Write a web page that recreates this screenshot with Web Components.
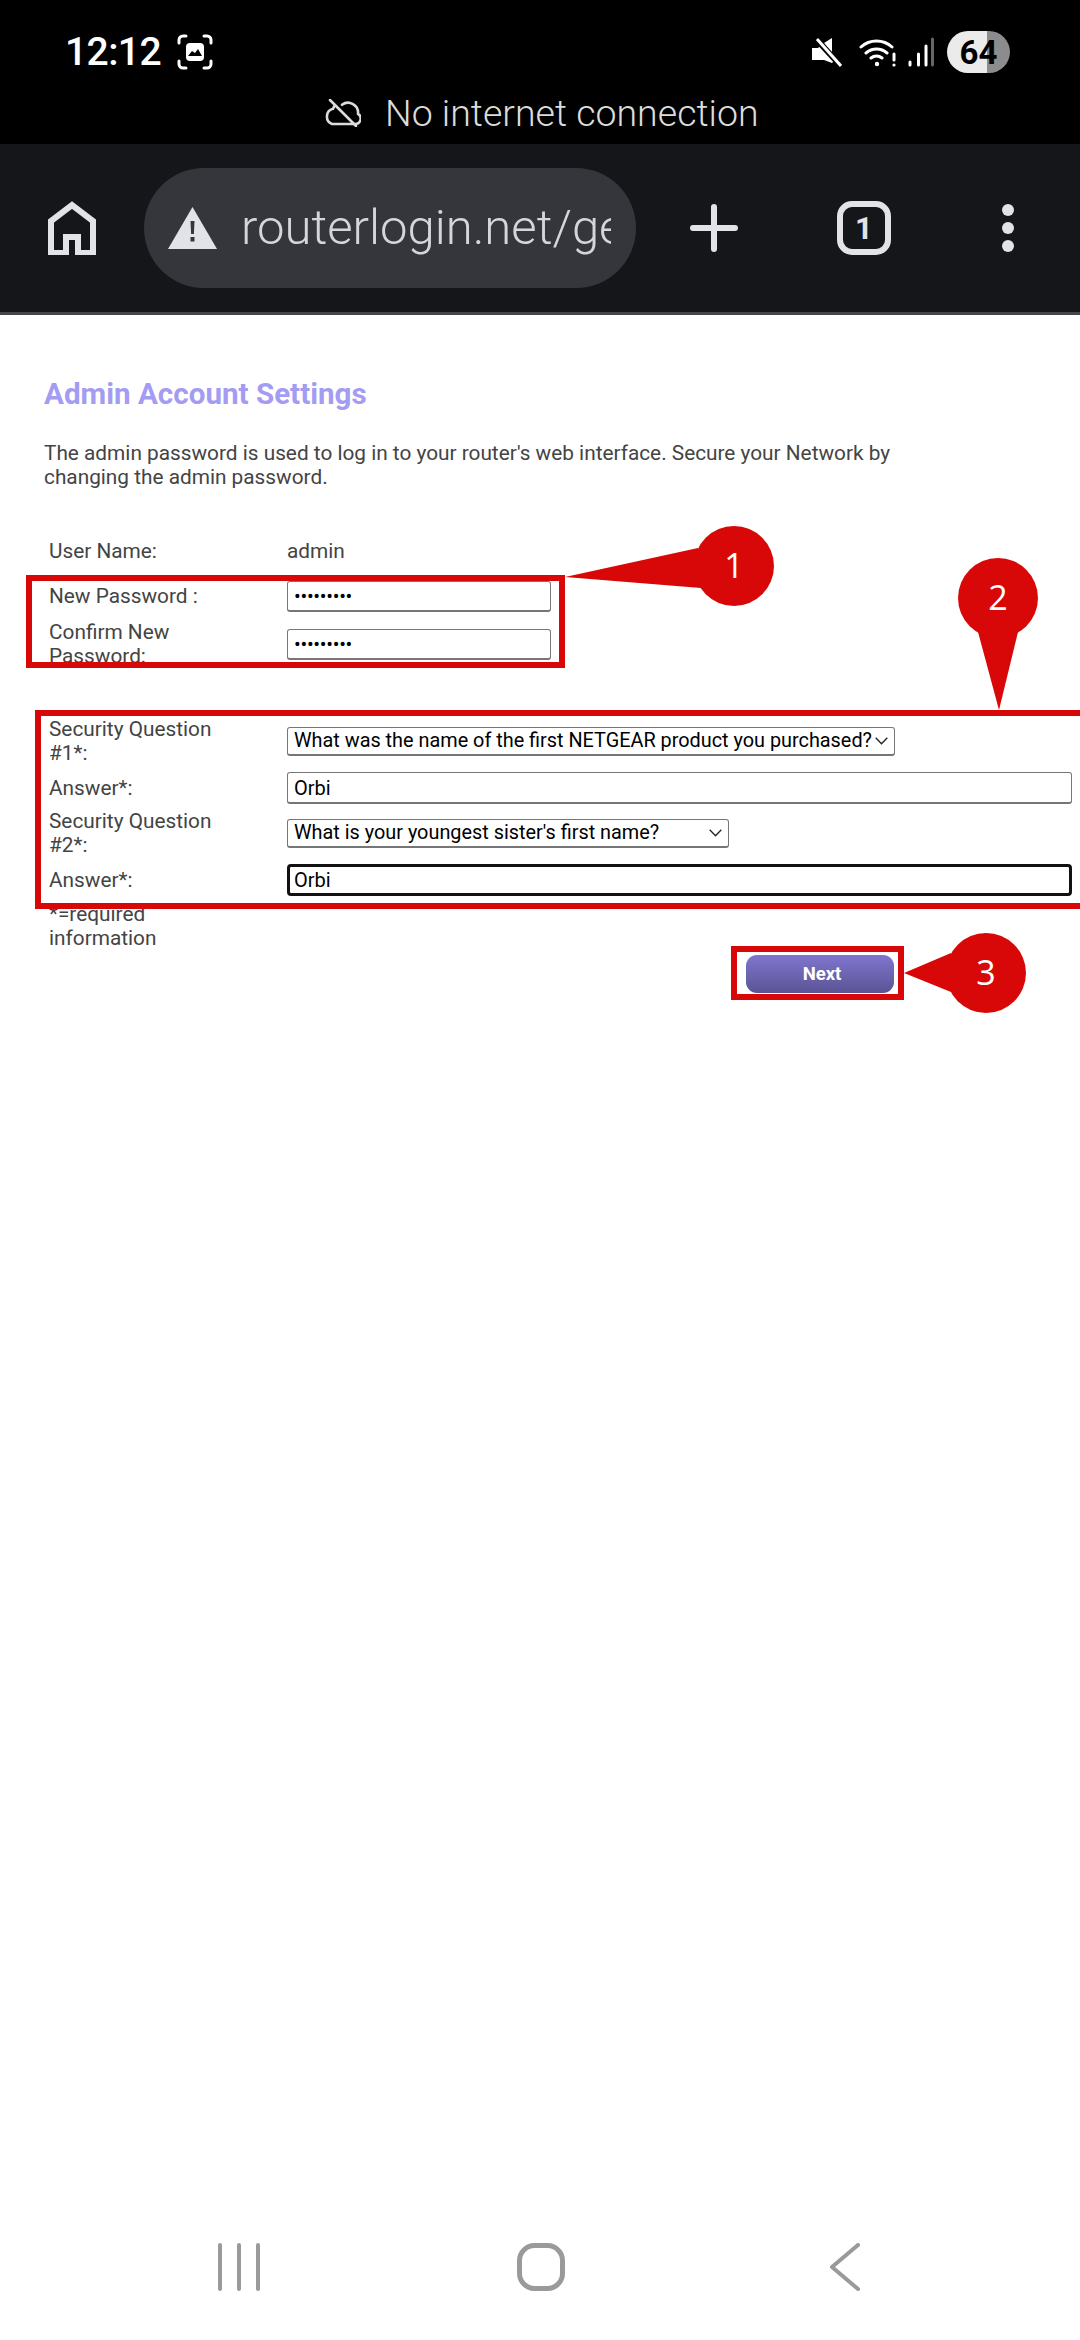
<!DOCTYPE html>
<html>
<head>
<meta charset="utf-8">
<title>Admin Account Settings</title>
<style>
  html, body { margin: 0; padding: 0; background: #fff; }
  body { width: 1080px; height: 2340px; position: relative; overflow: hidden; font-family: Roboto, sans-serif; }
  #page { display: flex; flex-direction: column; height: 2340px; }
</style>
</head>
<body>
<div id="page">
  <phone-status></phone-status>
  <browser-toolbar url="routerlogin.net/ge"></browser-toolbar>
  <admin-form></admin-form>
  <nav-bar></nav-bar>
</div>
<annotation-layer></annotation-layer>

<script>
class PhoneStatus extends HTMLElement {
  constructor() {
    super();
    this.attachShadow({ mode: "open" });
    this.shadowRoot.innerHTML = `
      <style>
        :host { display: block; height: 144px; background: #000; color: #fff; font-family: Roboto, sans-serif; flex: none; }
        .top { display: flex; align-items: center; height: 88px; padding: 16px 0 0 65px; box-sizing: border-box; }
        .time { font-size: 39px; font-weight: 500; width: 112px; letter-spacing: -0.6px; line-height: 46px; }
        .right { margin-left: auto; display: flex; align-items: center; padding-right: 70px; }
        .right svg { display: block; }
        .batt { width: 63px; height: 42px; border-radius: 21px; margin-left: 13px; color: #000; font-size: 33px; font-weight: 700;
          background: linear-gradient(90deg, #ebebeb 0 40px, #8c8c8c 40px); display: flex; align-items: center; justify-content: center; }
        .net { display: flex; align-items: center; height: 50px; padding-left: 324px; color: #dcdcdc; font-size: 37.500px; font-weight: 300; }
        .net svg { margin-right: 24px; }
      </style>
      <div class="top">
        <span class="time">12:12</span>
        <svg width="36" height="36" viewBox="0 0 36 36" fill="none" stroke="#fff" stroke-width="3" stroke-linecap="round">
          <path d="M2 9V6a4 4 0 0 1 4-4h3M27 2h3a4 4 0 0 1 4 4v3M34 27v3a4 4 0 0 1-4 4h-3M9 34H6a4 4 0 0 1-4-4v-3"/>
          <rect x="9" y="9" width="18" height="18" rx="4" fill="#fff" stroke="none"/>
          <path d="M11 22l4-5 3 2 3-4 4 7z" fill="#000" stroke="none"/>
        </svg>
        <div class="right">
          <svg width="30" height="30" viewBox="0 0 30 30" style="margin-right:17px">
            <path d="M0 11h6l3-3 14 16-2 1-1 1-8-3-6 0H0z" fill="#fff"/>
            <path d="M12 6l8-5v15z" fill="#fff"/>
            <path d="M5 3l24 26" stroke="#000" stroke-width="6"/>
            <path d="M5 2l24 27" stroke="#fff" stroke-width="3"/>
          </svg>
          <svg width="38" height="30" viewBox="0 0 38 30" fill="none" stroke="#fff" stroke-width="3" stroke-linecap="round" style="margin-right:11px">
            <path d="M2 10a23 23 0 0 1 31 0M7 16a16 16 0 0 1 21 0M12 21a9 9 0 0 1 11 0"/>
            <circle cx="18" cy="27" r="2.2" fill="#fff" stroke="none"/>
            <path d="M35 17v6"/>
            <circle cx="35" cy="28" r="1.6" fill="#fff" stroke="none"/>
          </svg>
          <svg width="26" height="30" viewBox="0 0 26 30" stroke-width="3" stroke-linecap="round" fill="none">
            <path d="M2 25v3M10.500 17v11M18 9v19" stroke="#fff"/>
            <path d="M24.500 2v26" stroke="#666"/>
          </svg>
          <div class="batt">64</div>
        </div>
      </div>
      <div class="net">
        <svg width="37" height="28" viewBox="0 0 37 28" fill="none" stroke="#dcdcdc" stroke-width="2.600" stroke-linecap="round">
          <path d="M11 6.500A9 9 0 0 0 9 9.800 8 8 0 0 0 8 25h23a5.500 5.500 0 0 0 3-10.200 10 10 0 0 0-16-9"/>
          <path d="M6 1l26 26"/>
        </svg>
        <span>No internet connection</span>
      </div>`;
  }
}

class BrowserToolbar extends HTMLElement {
  constructor() {
    super();
    this.attachShadow({ mode: "open" });
    const url = this.getAttribute("url");
    this.shadowRoot.innerHTML = `
      <style>
        :host { display: flex; align-items: center; height: 171px; box-sizing: border-box; background: #14161a; border-bottom: 3px solid #45464c;
          padding-left: 48px; color: #e2e3e8; font-family: Roboto, sans-serif; flex: none; }
        svg { display: block; flex: none; }
        .pill { width: 492px; height: 120px; margin-left: 48px; border-radius: 60px; background: #35363b; display: flex; align-items: center; padding-left: 24px; box-sizing: border-box; flex: none; }
        .url { margin-left: 24px; width: 370px; overflow: hidden; white-space: nowrap; font-size: 49px; font-weight: 300; color: #d5d6db; line-height: 60px; }
        .tab { width: 54px; height: 54px; box-sizing: border-box; border: 6px solid #e2e3e8; border-radius: 15px; margin-left: 99px; display: flex; align-items: center; justify-content: center; font-size: 31px; font-weight: 700; flex: none; }
        .dots { margin-left: 111px; display: grid; gap: 6px; }
        .dots i { display: block; width: 12px; height: 12px; border-radius: 50%; background: #e2e3e8; }
      </style>
      <svg width="48" height="54" viewBox="0 0 48 54" fill="none" stroke="#e2e3e8" stroke-width="6">
        <path d="M3 52V20L24 4l21 16v32H30V36H18v16z"/>
      </svg>
      <div class="pill">
        <svg width="49" height="42" viewBox="0 0 49 42">
          <path d="M24.500 0L49 42H0z" fill="#e2e3e8"/>
          <path d="M22.500 14h4l-.6 13h-2.800z M22.500 30h4v4.500h-4z" fill="#35363b"/>
        </svg>
        <div class="url">${url}</div>
      </div>
      <svg width="48" height="48" viewBox="0 0 48 48" stroke="#e2e3e8" stroke-width="6" stroke-linecap="round" style="margin-left:54px">
        <path d="M24 3v42M3 24h42"/>
      </svg>
      <div class="tab">1</div>
      <div class="dots"><i></i><i></i><i></i></div>`;
  }
}

class FormRow extends HTMLElement {
  constructor() {
    super();
    this.attachShadow({ mode: "open" });
    this.shadowRoot.innerHTML = `
      <style>
        :host { display: grid; grid-template-columns: 238px 1fr; align-items: center; padding-left: 49px; }
        .label { width: 170px; line-height: 24px; }
        .ctl { display: block; min-width: 0; }
      </style>
      <div class="label"><slot name="label"></slot></div>
      <div class="ctl"><slot></slot></div>`;
  }
}

class TextField extends HTMLElement {
  constructor() {
    super();
    this.attachShadow({ mode: "open" });
    this.shadowRoot.innerHTML = `
      <style>
        :host { display: flex; align-items: center; box-sizing: border-box; height: 31px; padding: 0 6px; border: 1px solid #767676; border-bottom-width: 2px;
          border-radius: 3px; color: #000; background: #fff; font-size: 20px; white-space: nowrap; }
        :host([focused]) { border: 3px solid #111; padding: 0 4px; height: 32px; border-radius: 4px; }
        :host([secret]) { letter-spacing: -0.3px; }
      </style>
      <slot></slot>`;
  }
}

class SelectField extends HTMLElement {
  constructor() {
    super();
    this.attachShadow({ mode: "open" });
    this.shadowRoot.innerHTML = `
      <style>
        :host { display: flex; align-items: center; justify-content: space-between; box-sizing: border-box; height: 29px; padding: 0 6px; border: 1px solid #767676; border-bottom-width: 2px;
          border-radius: 3px; color: #000; background: #fff; font-size: 19.850px; white-space: nowrap; }
        svg { flex: none; }
      </style>
      <slot></slot>
      <svg width="13" height="8" viewBox="0 0 13 8" fill="none" stroke="#222" stroke-width="1.300"><path d="M.7.7l5.800 6 5.800-6"/></svg>`;
  }
}

class AdminForm extends HTMLElement {
  constructor() {
    super();
    this.attachShadow({ mode: "open" });
    this.shadowRoot.innerHTML = `
      <style>
        :host { display: block; flex: 1; font-family: Roboto, sans-serif; font-size: 20.800px; color: #444; padding-top: 62px; }
        h1 { margin: 0 0 0 44px; font-size: 29.600px; line-height: 34px; font-weight: 700; color: #a39cf2; }
        p { margin: 30px 0 0 44px; width: 900px; line-height: 24px; }
        .rows { margin-top: 50px; }
        .short { width: 264px; }
        .wide { width: 785px; height: 32px; }
        .req { margin: 6px 0 0 49px; width: 170px; line-height: 24px; }
        .foot { display: flex; justify-content: flex-end; padding-right: 186px; margin-top: 5px; }
        .next { width: 148px; height: 38px; box-sizing: border-box; padding-left: 4px; border-radius: 11px; background: linear-gradient(#8075cf, #5a5494); color: #fff; font-weight: 700; font-size: 18.500px;
          display: flex; align-items: center; justify-content: center; }
      </style>
      <h1>Admin Account Settings</h1>
      <p>The admin password is used to log in to your router's web interface. Secure your Network by changing the admin password.</p>
      <div class="rows">
        <form-row style="height:24px"><span slot="label">User Name:</span>admin</form-row>
        <form-row style="height:32px;margin-top:17px"><span slot="label">New Password :</span><text-field secret class="short">•••••••••</text-field></form-row>
        <form-row style="height:48px;margin-top:8px"><span slot="label">Confirm New Password:</span><text-field secret class="short">•••••••••</text-field></form-row>
        <form-row style="height:48px;margin-top:49px"><span slot="label">Security Question #1*:</span><select-field style="width:608px">What was the name of the first NETGEAR product you purchased?</select-field></form-row>
        <form-row style="height:32px;margin-top:7px"><span slot="label">Answer*:</span><text-field class="wide">Orbi</text-field></form-row>
        <form-row style="height:48px;margin-top:5px"><span slot="label">Security Question #2*:</span><select-field style="width:442px">What is your youngest sister's first name?</select-field></form-row>
        <form-row style="height:32px;margin-top:7px"><span slot="label">Answer*:</span><text-field focused class="wide">Orbi</text-field></form-row>
      </div>
      <div class="req">*=required information</div>
      <div class="foot"><div class="next">Next</div></div>`;
  }
}

class NavBar extends HTMLElement {
  constructor() {
    super();
    this.attachShadow({ mode: "open" });
    this.shadowRoot.innerHTML = `
      <style>
        :host { display: flex; align-items: flex-start; height: 97px; flex: none; padding-left: 218px; }
        svg { display: block; flex: none; }
      </style>
      <svg width="42" height="48" viewBox="0 0 42 48" stroke="#9a9a9a" stroke-width="4" stroke-linecap="round">
        <path d="M2 2v44M21 2v44M40 2v44"/>
      </svg>
      <svg width="48" height="48" viewBox="0 0 48 48" fill="none" stroke="#9a9a9a" stroke-width="5" style="margin-left:257px">
        <rect x="2.500" y="2.500" width="43" height="43" rx="15"/>
      </svg>
      <svg width="30" height="48" viewBox="0 0 30 48" fill="none" stroke="#9a9a9a" stroke-width="4" stroke-linecap="round" stroke-linejoin="round" style="margin-left:265px">
        <path d="M28 2L2 24l26 22"/>
      </svg>`;
  }
}

// red boxes and numbered pins drawn on top of the screenshot
const BOXES = [
  [26, 575, 539, 93],
  [35, 710, 1051, 199],
  [731, 946, 173, 54],
];
const PINS = [
  { n: 1, cx: 734, cy: 566, tail: "565,577 698,548 701,588" },
  { n: 2, cx: 998, cy: 598, tail: "999,710 978,632 1018,632" },
  { n: 3, cx: 986, cy: 973, tail: "904,973 951,953 951,992" },
];

class AnnotationLayer extends HTMLElement {
  constructor() {
    super();
    this.attachShadow({ mode: "open" });
    const boxes = BOXES.map(([x, y, w, h]) =>
      `<rect x="${x + 3}" y="${y + 3}" width="${w - 6}" height="${h - 6}" fill="none" stroke="#d80808" stroke-width="6"/>`).join("");
    const pins = PINS.map((p) => `
      <polygon points="${p.tail}" fill="#d80808"/>
      <circle cx="${p.cx}" cy="${p.cy}" r="40" fill="#d80808"/>
      <text x="${p.cx}" y="${p.cy + 12}" text-anchor="middle" fill="#fff" font-family="'Open Sans', sans-serif" font-size="34">${p.n}</text>`).join("");
    this.shadowRoot.innerHTML = `
      <style>
        :host { display: block; position: absolute; left: 0; top: 0; width: 1080px; height: 2340px; pointer-events: none; }
        svg { display: block; }
      </style>
      <svg width="1080" height="2340" viewBox="0 0 1080 2340">${boxes}${pins}</svg>`;
  }
}

customElements.define("phone-status", PhoneStatus);
customElements.define("browser-toolbar", BrowserToolbar);
customElements.define("form-row", FormRow);
customElements.define("text-field", TextField);
customElements.define("select-field", SelectField);
customElements.define("admin-form", AdminForm);
customElements.define("nav-bar", NavBar);
customElements.define("annotation-layer", AnnotationLayer);
</script>
</body>
</html>
